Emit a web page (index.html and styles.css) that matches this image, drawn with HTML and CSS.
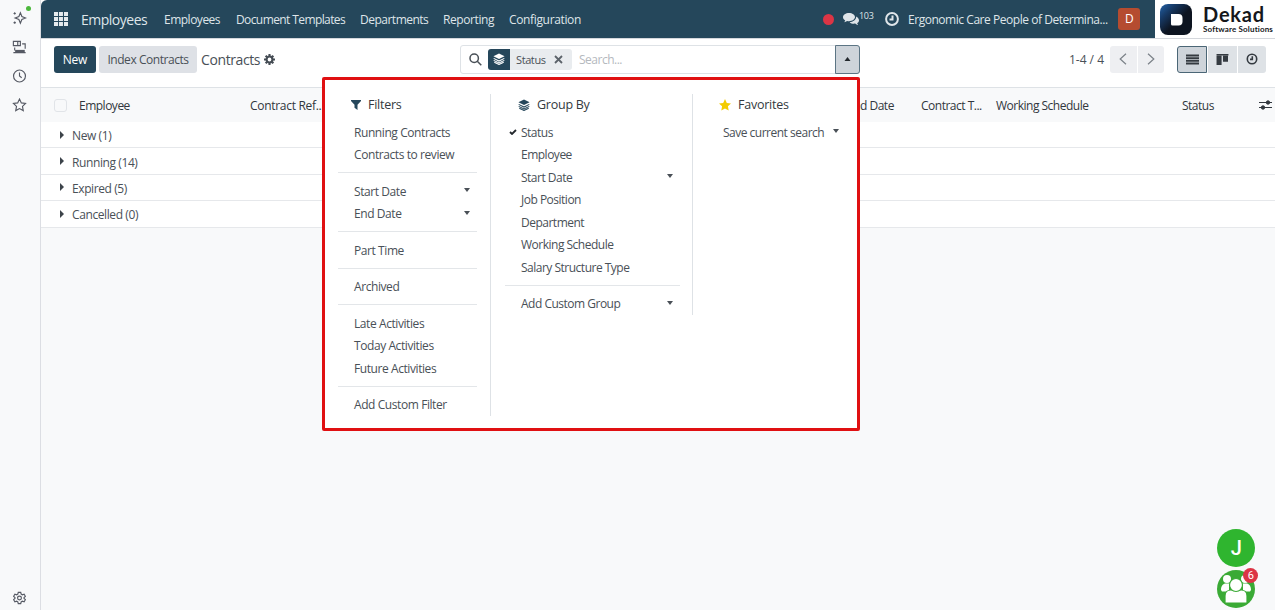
FILE: index.html
```html
<!DOCTYPE html>
<html lang="en">

<head>
	<meta charset="UTF-8">
	<meta name="viewport" content="width=device-width, initial-scale=1.0">
	<title>Contracts</title>
	<link rel="stylesheet" href="styles.css">
</head>

<body>
	<aside class="sidebar">
		<svg class="side-icon" viewBox="0 0 16 16"><path d="M9 2l1.700 4.300L15 8l-4.300 1.700L9 14l-1.700-4.300L3 8l4.300-1.700z" /><path d="M2.500 1.500v2.600M1.200 2.800h2.600M2.500 12v2.600M1.200 13.300h2.600" /></svg>
		<svg class="side-icon" viewBox="0 0 16 16"><path d="M1 1.500h8v5H1zM6 1.500v5M11 4.500h3.500V10M2.500 8.500V12M1 14.500h14" /><path d="M3 12.500h11" stroke-width="2.400" /></svg>
		<svg class="side-icon" viewBox="0 0 16 16"><circle cx="8" cy="8" r="6.800" /><path d="M8 4v4l2.500 2" /></svg>
		<svg class="side-icon" viewBox="0 0 16 16"><path d="M8 1.200l2.100 4.400 4.800.7-3.500 3.300.9 4.800L8 12.100l-4.300 2.300.9-4.800L1.100 6.300l4.800-.7z" /></svg>
		<svg class="side-icon settings" viewBox="0 0 16 16"><path d="M6.600 1.500h2.800l.5 2 1.400.8 2-.6 1.400 2.400-1.500 1.400v1l1.500 1.400-1.400 2.400-2-.6-1.400.8-.5 2H6.600l-.5-2-1.400-.8-2 .6-1.400-2.400 1.500-1.400v-1L1.300 6.100l1.400-2.400 2 .6 1.400-.8z" /><circle cx="8" cy="8" r="2.200" /></svg>
		<span class="dot"></span>
	</aside>

	<div class="app">
		<header>
			<div class="navbar">
				<svg class="apps" viewBox="0 0 15 15"><path d="M0 0h4.300v4.300H0zM5.300 0h4.300v4.300H5.300zM10.700 0H15v4.300h-4.300zM0 5.300h4.300v4.300H0zM5.300 5.300h4.300v4.300H5.300zM10.700 5.300H15v4.300h-4.300zM0 10.700h4.300V15H0zM5.300 10.700h4.300V15H5.300zM10.700 10.700H15V15h-4.300z" /></svg>
				<a class="brand">Employees</a>
				<nav>
					<a class="n1">Employees</a>
					<a class="n2">Document Templates</a>
					<a class="n3">Departments</a>
					<a class="n4">Reporting</a>
					<a class="n5">Configuration</a>
				</nav>
				<div class="systray">
					<span class="record"></span>
					<svg class="chat" viewBox="0 0 16 14"><path d="M6 1C2.700 1 0 2.900 0 5.200c0 1.300.9 2.500 2.200 3.200-.2.700-.6 1.300-1.200 1.800 1.200-.1 2.300-.5 3.100-1.200.6.200 1.200.2 1.900.2 3.300 0 6-1.800 6-4.100S9.300 1 6 1z" /><path d="M13.200 4.500c.2 3-3 5.500-6.600 5.700 1 1 2.600 1.500 4.300 1.500.4 0 .9 0 1.300-.1.800.8 1.800 1.200 3 1.300-.5-.5-.9-1.100-1.100-1.800 1.200-.7 1.900-1.600 1.900-2.700 0-1.600-1.100-3.100-2.800-3.900z" /></svg>
					<span class="count">103</span>
					<svg class="clock" viewBox="0 0 14 14"><circle cx="7" cy="7" r="5.900" /><path d="M7.500 3.500v4H4.500" /></svg>
					<span class="company">Ergonomic Care People of Determina...</span>
					<span class="avatar">D</span>
				</div>
			</div>
			<div class="logo">
				<svg class="logo-mark" viewBox="0 0 32 31">
					<defs>
						<linearGradient id="mark" x1="0" y1="0" x2="1" y2="1">
							<stop offset="0" stop-color="#2262a8" />
							<stop offset=".25" stop-color="#173a66" />
							<stop offset=".55" stop-color="#0d1420" />
						</linearGradient>
					</defs>
					<rect width="32" height="31" rx="8" fill="url(#mark)" />
					<path d="M11 10h7.500a4 4 0 0 1 4 4v3.500a4 4 0 0 1-4 4H12.500a1.500 1.500 0 0 1-1.500-1.500z" fill="#fff" />
				</svg>
				<div class="logo-text">
					<strong>Dekad</strong>
					<span>Software Solutions</span>
				</div>
			</div>
		</header>

		<!-- Control panel -->
		<div class="panel">
			<button class="btn primary">New</button>
			<button class="btn index">Index Contracts</button>
			<span class="title">Contracts</span>
			<svg class="gear" viewBox="0 0 12 12"><circle cx="6" cy="6" r="3.200" /><path d="M6 0v2.500M6 9.500V12M0 6h2.500M9.500 6H12M1.800 1.800l1.700 1.700M8.500 8.500l1.700 1.700M10.200 1.800L8.500 3.500M3.500 8.500l-1.700 1.700" /></svg>
			<div class="search">
				<svg class="lens" viewBox="0 0 13 13"><circle cx="5.200" cy="5.200" r="4.200" /><path d="M8.300 8.300l4 4" /></svg>
				<div class="facet">
					<span class="facet-icon"><svg class="layers" viewBox="0 0 14 14"><path d="M7 .5l6.500 3.300L7 7.100.500 3.800z" /><path class="line" d="M.8 6.300L7 9.400l6.200-3.100M.8 8.600L7 11.700l6.200-3.100M1.500 10.700L7 13.400l5.500-2.700" /></svg></span>
					<span class="facet-label">Status</span>
					<svg class="close" viewBox="0 0 9 9"><path d="M1 1l7 7M8 1L1 8" /></svg>
				</div>
				<span class="placeholder">Search...</span>
				<button class="toggle"><svg viewBox="0 0 6 4"><path d="M0 4l3-4 3 4z" /></svg></button>
			</div>
			<span class="pager">1-4 / 4</span>
			<div class="pages">
				<button><svg viewBox="0 0 8 12"><path d="M7 .8L1.200 6 7 11.200" /></svg></button>
				<button><svg viewBox="0 0 8 12"><path d="M1 .8L6.800 6 1 11.200" /></svg></button>
			</div>
			<div class="views">
				<button class="active"><svg viewBox="0 0 13 10"><path d="M0 0h13v2H0zM0 2.700h13v1.800H0zM0 5.300h13v1.900H0zM0 8h13v2H0z" /></svg></button>
				<button><svg viewBox="0 0 13 12"><path d="M0 0h13v1.500H0zM0 2h5.500v10H0zM7 2h5.500v6.500H7z" /></svg></button>
				<button><svg class="ring" viewBox="0 0 12 12"><circle cx="6" cy="6" r="4.700" /><path d="M6.300 3.200v3.200H4" /></svg></button>
			</div>
		</div>

		<!-- List view -->
		<div class="list">
			<div class="list-head">
				<span class="check"></span>
				<span class="c-employee">Employee</span>
				<span class="c-ref">Contract Ref...</span>
				<span class="c-end">End Date</span>
				<span class="c-type">Contract T...</span>
				<span class="c-schedule">Working Schedule</span>
				<span class="c-status">Status</span>
				<svg class="sliders" viewBox="0 0 13 12"><path d="M0 3.500h13M0 8.500h13" /><circle cx="9" cy="3.500" r="1.700" /><circle cx="4" cy="8.500" r="1.700" /></svg>
			</div>
			<div class="group"><i></i>New (1)</div>
			<div class="group"><i></i>Running (14)</div>
			<div class="group"><i></i>Expired (5)</div>
			<div class="group"><i></i>Cancelled (0)</div>
		</div>
	</div>

	<!-- Search dropdown -->
	<div class="menu">
		<section class="filters">
			<h3><svg class="funnel" viewBox="0 0 10 10"><path d="M0 0h10v.9L6.500 4.800V10L3.500 7.800v-3L0 .9z" /></svg>Filters</h3>
			<a>Running Contracts</a>
			<a>Contracts to review</a>
			<hr>
			<a>Start Date<i></i></a>
			<a>End Date<i></i></a>
			<hr>
			<a>Part Time</a>
			<hr>
			<a>Archived</a>
			<hr>
			<a>Late Activities</a>
			<a>Today Activities</a>
			<a>Future Activities</a>
			<hr>
			<a>Add Custom Filter</a>
		</section>
		<section class="groupby">
			<h3><svg class="layers" viewBox="0 0 14 14"><path d="M7 .5l6.500 3.300L7 7.100.500 3.800z" /><path class="line" d="M.8 6.300L7 9.400l6.200-3.100M.8 8.600L7 11.700l6.200-3.100M1.500 10.700L7 13.400l5.500-2.700" /></svg>Group By</h3>
			<a class="selected"><svg class="tick" viewBox="0 0 8 6"><path d="M1 3l2 2 4-4" /></svg>Status</a>
			<a>Employee</a>
			<a>Start Date<i></i></a>
			<a>Job Position</a>
			<a>Department</a>
			<a>Working Schedule</a>
			<a>Salary Structure Type</a>
			<hr>
			<a>Add Custom Group<i></i></a>
		</section>
		<section class="favorites">
			<h3><svg class="star" viewBox="0 0 12 12"><path d="M6 0l1.800 3.900 4.200.5-3.100 2.900.8 4.300L6 9.500l-3.700 2.100.8-4.300L0 4.400l4.200-.5z" /></svg>Favorites</h3>
			<a>Save current search<i></i></a>
		</section>
	</div>

	<div class="bubbles">
		<div class="bubble">J</div>
		<div class="bubble people">
			<svg viewBox="0 0 38 38">
				<circle cx="10" cy="9" r="4" /><circle cx="28" cy="9" r="4" />
				<path d="M4 20c0-4 2-6.500 5-6.500h3v8H5zM34 20c0-4-2-6.500-5-6.500h-3v8h7z" />
				<path class="edge" d="M8 33v-7c0-4 3-6 6-6h10c3 0 6 2 6 6v7z" />
				<circle class="edge" cx="19" cy="15" r="6.500" />
			</svg>
			<span class="badge">6</span>
		</div>
	</div>
</body>

</html>
```
FILE: styles.css
```css
body {
	font-family: "Open Sans", "Noto Sans", sans-serif;
	font-size: 12px;
	letter-spacing: -0.5px;
	color: #495057;
	margin: 0;
	height: 610px;
	display: flex;
	background-color: #f8f9fa;
	overflow: hidden;
	position: relative;
}

* {
	box-sizing: border-box;
}

svg {
	display: block;
	flex: none;
	fill: currentColor;
}

button {
	font: inherit;
	letter-spacing: inherit;
	border: none;
	padding: 0;
	color: inherit;
	display: flex;
	align-items: center;
	justify-content: center;
}

/* Sidebar */
.sidebar {
	width: 41px;
	flex: none;
	padding: 11px 0 5px 12px;
	display: flex;
	flex-direction: column;
	gap: 15px;
	border-right: 1px solid #dcdee3;
	position: relative;
}

.side-icon {
	width: 15px;
	height: 14px;
	fill: none;
	stroke: #555963;
	stroke-width: 1.3;
}

.settings {
	margin-top: auto;
}

.dot {
	position: absolute;
	left: 26px;
	top: 6px;
	width: 5px;
	height: 5px;
	border-radius: 50%;
	background-color: #4cb83c;
}

.app {
	flex: 1;
	min-width: 0;
}

/* Top bar */
header {
	display: flex;
	height: 38px;
	background-color: #fff;
}

.navbar {
	width: 1114px;
	display: flex;
	align-items: center;
	padding-left: 13px;
	background-color: #25475b;
	color: #dfe5e9;
	border-top-left-radius: 6px;
	white-space: nowrap;
}

.apps {
	width: 14px;
	height: 14px;
	color: #e6ebee;
}

.brand {
	width: 83px;
	margin-left: 13px;
	font-size: 14px;
}

nav {
	display: flex;
	flex: 1;
}

.n1 {
	width: 72px;
}

.n2 {
	width: 124px;
	letter-spacing: -0.6px;
}

.n3 {
	width: 83px;
}

.n4 {
	width: 66px;
	letter-spacing: -0.4px;
}

.n5 {
	letter-spacing: -0.35px;
}

.systray {
	display: flex;
	align-items: center;
	padding-right: 15px;
}

.record {
	width: 11px;
	height: 11px;
	border-radius: 50%;
	background-color: #dc3545;
	margin-right: 9px;
}

.chat {
	width: 16px;
	height: 14px;
}

.count {
	width: 26px;
	font-size: 9px;
	letter-spacing: -0.3px;
	padding-bottom: 8px;
}

.clock {
	width: 14px;
	height: 14px;
	fill: none;
	stroke: currentColor;
	stroke-width: 2;
}

.company {
	width: 210px;
	margin-left: 9px;
	letter-spacing: -0.46px;
}

.avatar {
	width: 22px;
	height: 22px;
	line-height: 22px;
	border-radius: 3px;
	background-color: #b54c30;
	color: #fff;
	text-align: center;
}

.logo {
	display: flex;
	align-items: center;
	padding-left: 5px;
	gap: 11px;
	color: #15171b;
}

.logo-mark {
	width: 32px;
	height: 31px;
}

.logo-text {
	font-family: Lato, sans-serif;
	letter-spacing: 0;
	white-space: nowrap;
}

.logo-text strong {
	display: block;
	font-size: 20px;
	line-height: 20px;
	letter-spacing: 0.8px;
}

.logo-text span {
	display: block;
	font-size: 8px;
	font-weight: bold;
	line-height: 10px;
	letter-spacing: 0.15px;
}

/* Control panel */
.panel {
	height: 49px;
	display: flex;
	align-items: center;
	padding: 0 9px 8px 13px;
	background-color: #fff;
	border-top: 1px solid #d4d7dc;
	white-space: nowrap;
}

.btn {
	height: 27px;
	border-radius: 3px;
}

.primary {
	width: 42px;
	background-color: #25475b;
	color: #fff;
	letter-spacing: -0.2px;
}

.index {
	width: 98px;
	margin-left: 3px;
	background-color: #dee1e6;
	letter-spacing: -0.45px;
}

.title {
	width: 61px;
	margin-left: 4px;
	font-size: 14px;
	letter-spacing: -0.4px;
}

.gear {
	width: 11px;
	height: 11px;
	margin-left: 2px;
	fill: none;
	stroke: #454c54;
	stroke-width: 2.3;
}

.search {
	width: 400px;
	height: 29px;
	margin-left: 185px;
	display: flex;
	align-items: center;
	padding-left: 8px;
	border: 1px solid #dee2e6;
	border-radius: 3px;
}

.lens {
	width: 13px;
	height: 13px;
	fill: none;
	stroke: #495057;
	stroke-width: 1.5;
}

.facet {
	width: 84px;
	height: 21px;
	margin-left: 6px;
	display: flex;
	align-items: center;
	background-color: #e9ecef;
	border-radius: 3px;
	overflow: hidden;
	font-size: 11px;
	letter-spacing: -0.4px;
}

.facet-icon {
	width: 22px;
	height: 21px;
	display: flex;
	align-items: center;
	justify-content: center;
	background-color: #25475b;
	color: #fff;
}

.layers {
	width: 12px;
	height: 12px;
}

.layers .line {
	fill: none;
	stroke: currentColor;
	stroke-width: 1.2;
}

.facet-label {
	width: 32px;
	margin-left: 6px;
}

.close {
	width: 9px;
	height: 9px;
	margin-left: 6px;
	stroke: #5c636a;
	stroke-width: 1.8;
}

.placeholder {
	flex: 1;
	margin-left: 7px;
	color: #b5b9be;
}

.toggle {
	width: 25px;
	height: 29px;
	margin-right: -1px;
	background-color: #ced4da;
	border: 1px solid #5c7584;
	border-radius: 0 3px 3px 0;
	color: #23282d;
}

.toggle svg {
	width: 7px;
	height: 4px;
}

.pager {
	margin-left: auto;
	letter-spacing: 0;
}

.pages {
	display: flex;
	gap: 1px;
	margin-left: 6px;
}

.pages button {
	width: 26.5px;
	height: 27px;
	background-color: #eeeff2;
}

.pages button:first-child {
	border-radius: 3px 0 0 3px;
}

.pages button:last-child {
	border-radius: 0 3px 3px 0;
}

.pages svg {
	width: 8px;
	height: 12px;
	fill: none;
	stroke: #7b8188;
	stroke-width: 1.2;
}

.views {
	display: flex;
	gap: 1px;
	margin-left: 13px;
}

.views button {
	width: 29px;
	height: 27px;
	background-color: #dee2e6;
	color: #343a40;
}

.views button.active {
	width: 30px;
	background-color: #ced4da;
	border: 1px solid #4b6676;
	border-radius: 3px 0 0 3px;
}

.views button:last-child {
	width: 28px;
	border-radius: 0 3px 3px 0;
}

.views svg {
	width: 13px;
	height: 11px;
}

.views .ring {
	width: 12px;
	height: 12px;
	fill: none;
	stroke: currentColor;
	stroke-width: 1.6;
}

/* List */
.list-head {
	height: 35px;
	display: flex;
	align-items: center;
	padding-left: 13px;
	border-top: 1px solid #dee2e6;
	color: #31373d;
	white-space: nowrap;
}

.check {
	width: 13px;
	height: 13px;
	border: 1px solid #e1e4e8;
	border-radius: 3px;
	margin-right: 12px;
}

.c-employee {
	width: 171px;
}

.c-ref {
	width: 597px;
	letter-spacing: -0.3px;
}

.c-end {
	width: 74px;
}

.c-type {
	width: 75px;
}

.c-schedule {
	width: 186px;
}

.c-status {
	width: 77px;
}

.sliders {
	width: 13px;
	height: 12px;
	stroke: currentColor;
	stroke-width: 1;
}

.group {
	height: 26.4px;
	display: flex;
	align-items: center;
	padding: 2px 0 0 19px;
	background-color: #fff;
	border-bottom: 1px solid #e6e8eb;
	letter-spacing: -0.4px;
}

.group i {
	margin: 0 8px 2px 0;
	border: solid transparent;
	border-width: 4px 0 4px 4px;
	border-left-color: #3c434a;
}

/* Dropdown */
.menu {
	position: absolute;
	left: 322px;
	top: 77px;
	width: 538px;
	height: 354px;
	display: flex;
	align-items: flex-start;
	padding-top: 14px;
	background-color: #fff;
	border: 3px solid #e01012;
	border-radius: 2px;
}

.menu section {
	padding: 0 13px;
}

.menu .filters {
	width: 166px;
	border-right: 1px solid #dee2e6;
}

.menu .groupby {
	width: 202px;
	padding: 0 12px 0 14px;
	border-right: 1px solid #dee2e6;
}

.menu .favorites {
	width: 164px;
	padding-right: 11px;
}

.menu h3 {
	display: flex;
	align-items: center;
	height: 21px;
	margin: 0 0 6px;
	padding-left: 13px;
	gap: 7px;
	font-size: 12.5px;
	font-weight: normal;
	letter-spacing: -0.25px;
	color: #343a40;
}

.menu h3 svg {
	color: #25475b;
}

.funnel {
	width: 10px;
	height: 10px;
}

.menu .star {
	width: 12px;
	height: 12px;
	color: #f3cc00;
}

.menu a {
	display: flex;
	align-items: center;
	height: 22.5px;
	padding: 0 7px 0 16px;
	white-space: nowrap;
	position: relative;
}

.menu .filters a {
	letter-spacing: -0.42px;
}

.menu .favorites a {
	padding-left: 17px;
}

.menu a i {
	margin: 0 0 2px auto;
	border: solid transparent;
	border-width: 4px 3.5px 0;
	border-top-color: #495057;
}

.menu hr {
	height: 1px;
	margin: 6px 0 7px;
	border: none;
	background-color: #e3e6e9;
}

.tick {
	position: absolute;
	left: 4px;
	top: 8px;
	width: 8px;
	height: 6px;
	fill: none;
	stroke: #23282d;
	stroke-width: 1.8;
}

/* Floating chat */
.bubbles {
	position: absolute;
	left: 1217px;
	top: 529px;
	display: flex;
	flex-direction: column;
	gap: 3px;
}

.bubble {
	width: 38px;
	height: 38px;
	border-radius: 50%;
	background-color: #2fb52f;
	color: #fff;
	font-family: Roboto, sans-serif;
	font-size: 20px;
	font-weight: 500;
	line-height: 38px;
	text-align: center;
	position: relative;
}

.people {
	background-color: #3aaa35;
}

.people .edge {
	stroke: #3aaa35;
	stroke-width: 1.2;
}

.badge {
	position: absolute;
	right: -3px;
	top: -2px;
	width: 15px;
	height: 15px;
	line-height: 15px;
	border-radius: 50%;
	background-color: #dc3545;
	font-size: 11px;
	font-weight: normal;
}
```
